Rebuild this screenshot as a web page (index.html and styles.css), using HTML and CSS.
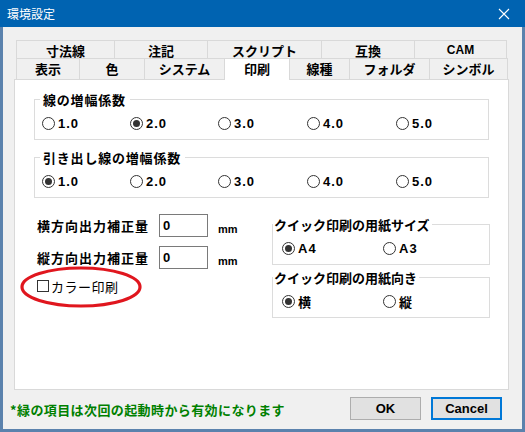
FILE: index.html
```html
<!DOCTYPE html>
<html lang="ja">
<head>
    <meta charset="UTF-8">
    <title>環境設定</title>
    <link rel="stylesheet" href="styles.css">
</head>
<body>
    <div class="window">
        <div class="titlebar">
            <span class="title">環境設定</span>
            <svg class="close" width="12" height="12" viewBox="0 0 12 12">
                <path d="M1 1 L11 11 M11 1 L1 11" stroke="#ffffff" stroke-width="1.1" fill="none"/>
            </svg>
        </div>
        <div class="client">
            <div class="tabs">
                <div class="tab-row back">
                    <div class="tab">寸法線</div>
                    <div class="tab">注記</div>
                    <div class="tab">スクリプト</div>
                    <div class="tab">互換</div>
                    <div class="tab latin">CAM</div>
                </div>
                <div class="tab-row front">
                    <div class="tab">表示</div>
                    <div class="tab">色</div>
                    <div class="tab">システム</div>
                    <div class="tab active">印刷</div>
                    <div class="tab">線種</div>
                    <div class="tab">フォルダ</div>
                    <div class="tab">シンボル</div>
                </div>
            </div>

            <div class="panel">
                <fieldset class="group wide">
                    <legend>線の増幅係数</legend>
                    <div class="radios five">
                        <label class="radio"><span class="dot"></span>1.0</label>
                        <label class="radio checked"><span class="dot"></span>2.0</label>
                        <label class="radio"><span class="dot"></span>3.0</label>
                        <label class="radio"><span class="dot"></span>4.0</label>
                        <label class="radio"><span class="dot"></span>5.0</label>
                    </div>
                </fieldset>

                <fieldset class="group wide second">
                    <legend>引き出し線の増幅係数</legend>
                    <div class="radios five">
                        <label class="radio checked"><span class="dot"></span>1.0</label>
                        <label class="radio"><span class="dot"></span>2.0</label>
                        <label class="radio"><span class="dot"></span>3.0</label>
                        <label class="radio"><span class="dot"></span>4.0</label>
                        <label class="radio"><span class="dot"></span>5.0</label>
                    </div>
                </fieldset>

                <div class="lower">
                    <div class="left-col">
                        <div class="field-row">
                            <span class="field-label">横方向出力補正量</span>
                            <span class="input">0</span>
                            <span class="unit">mm</span>
                        </div>
                        <div class="field-row">
                            <span class="field-label">縦方向出力補正量</span>
                            <span class="input">0</span>
                            <span class="unit">mm</span>
                        </div>
                        <label class="check"><span class="box"></span>カラー印刷</label>
                        <!-- red marker drawn over the checkbox -->
                        <svg class="marker" width="124" height="44" viewBox="0 0 124 44">
                            <ellipse cx="62" cy="22" rx="59" ry="19" fill="none" stroke="#e0161e" stroke-width="3.2"/>
                        </svg>
                    </div>
                    <div class="right-col">
                        <fieldset class="group small">
                            <legend>クイック印刷の用紙サイズ</legend>
                            <div class="radios two">
                                <label class="radio checked"><span class="dot"></span>A4</label>
                                <label class="radio"><span class="dot"></span>A3</label>
                            </div>
                        </fieldset>
                        <fieldset class="group small next">
                            <legend>クイック印刷の用紙向き</legend>
                            <div class="radios two">
                                <label class="radio checked"><span class="dot"></span>横</label>
                                <label class="radio"><span class="dot"></span>縦</label>
                            </div>
                        </fieldset>
                    </div>
                </div>
            </div>

            <div class="footer">
                <p class="note">*緑の項目は次回の起動時から有効になります</p>
                <button class="btn">OK</button>
                <button class="btn focus">Cancel</button>
            </div>
        </div>
    </div>
</body>
</html>
```

FILE: styles.css
```css
* {
    box-sizing: border-box;
}

body {
    margin: 0;
    width: 525px;
    height: 432px;
    overflow: hidden;
    background-color: #5b82ad;
    font-family: "Liberation Sans", "Noto Sans CJK JP", sans-serif;
    color: #000000;
}

.window {
    width: 525px;
    height: 432px;
}

.titlebar {
    height: 27px;
    background-color: #0063b1;
    display: flex;
    align-items: center;
    justify-content: space-between;
    padding: 0 15px 0 7px;
}

.title {
    color: #ffffff;
    font-family: "Noto Sans CJK JP", sans-serif;
    font-size: 12px;
    line-height: 14px;
}

.client {
    margin: 0 3px;
    height: 402px;
    background-color: #f0f0f0;
    padding-top: 13px;
}

/* tab strip, two rows */
.tabs {
    margin-left: 13px;
}

.tab-row {
    display: flex;
}

.tab {
    border-top: 1px solid #d9d9d9;
    border-right: 1px solid #d9d9d9;
    background-color: #f0f0f0;
    font-family: "Noto Sans CJK JP", sans-serif;
    font-weight: bold;
    font-size: 13px;
    text-align: center;
}

.tab:first-child {
    border-left: 1px solid #d9d9d9;
}

.tab.latin {
    font-family: "Liberation Sans", sans-serif;
    font-size: 12px;
}

.back .tab {
    height: 18px;
    line-height: 17px;
    padding-top: 1px;
}

.front .tab {
    height: 21px;
    line-height: 20px;
}

.back .tab:nth-child(1) { width: 99px; }
.back .tab:nth-child(2) { width: 93px; }
.back .tab:nth-child(3) { width: 114px; }
.back .tab:nth-child(4) { width: 93px; }
.back .tab:nth-child(5) { width: 92px; }

.front .tab:nth-child(1) { width: 64px; }
.front .tab:nth-child(2) { width: 65px; }
.front .tab:nth-child(3) { width: 80px; }
.front .tab:nth-child(4) { width: 65px; }
.front .tab:nth-child(5) { width: 60px; }
.front .tab:nth-child(6) { width: 80px; }
.front .tab:nth-child(7) { width: 78px; }

.front .tab.active {
    background-color: #ffffff;
    height: 22px;
    margin-bottom: -1px;
    line-height: 19px;
    position: relative;
    z-index: 1;
    border-left: 1px solid #d9d9d9;
    margin-left: -1px;
    width: 66px;
}

.panel {
    margin-left: 11px;
    width: 495px;
    height: 311px;
    background-color: #ffffff;
    border: 1px solid #d9d9d9;
    padding: 12px 0 0 19px;
}

/* group boxes */
.group {
    border: 1px solid #dcdcdc;
    margin: 0;
    padding: 8px 7px 8px;
    min-width: 0;
}

.group legend {
    padding: 0 4px 0 3px;
    margin-left: -2px;
    font-family: "Noto Sans CJK JP", sans-serif;
    font-weight: bold;
    font-size: 13px;
    line-height: 15px;
    letter-spacing: 0.8px;
}

.group.wide {
    width: 455px;
}

.group.second {
    margin-top: 10px;
}

.radios {
    display: grid;
}

.radios.five {
    grid-template-columns: 88px 88px 89px 89px auto;
}

.radios.two {
    grid-template-columns: 101px auto;
}

.radio {
    display: flex;
    align-items: center;
    height: 16px;
    font-family: "Liberation Sans", "Noto Sans CJK JP", sans-serif;
    font-weight: bold;
    font-size: 13px;
    letter-spacing: 1px;
}

.dot {
    width: 13px;
    height: 13px;
    border: 1px solid #333333;
    border-radius: 50%;
    background-color: #ffffff;
    margin-right: 3px;
    display: grid;
    place-items: center;
}

.checked .dot::after {
    content: "";
    width: 7px;
    height: 7px;
    border-radius: 50%;
    background-color: #333333;
}

/* lower part: offsets + print options */
.lower {
    display: flex;
    margin-top: 16px;
}

.left-col {
    width: 238px;
    padding-left: 3px;
    position: relative;
}

.field-row {
    display: flex;
    align-items: center;
    height: 23px;
    margin-bottom: 9px;
}

.field-label {
    width: 122px;
    font-family: "Noto Sans CJK JP", sans-serif;
    font-weight: bold;
    font-size: 13px;
    letter-spacing: 1px;
}

.input {
    width: 49px;
    height: 23px;
    border: 1px solid #7a7a7a;
    background-color: #ffffff;
    padding-left: 3px;
    font-weight: bold;
    font-size: 13px;
    line-height: 21px;
}

.unit {
    margin-left: 10px;
    padding-top: 6px;
    font-weight: bold;
    font-size: 11px;
}

.check {
    display: flex;
    align-items: center;
    height: 16px;
    margin-top: 4px;
    font-family: "Noto Sans CJK JP", sans-serif;
    font-size: 13px;
    letter-spacing: 0.5px;
}

.box {
    width: 12px;
    height: 12px;
    border: 1px solid #333333;
    background-color: #ffffff;
    margin-right: 2px;
}

.marker {
    position: absolute;
    left: -15px;
    top: 51px;
}

.right-col {
    width: 218px;
    padding-top: 3px;
}

.group.small {
    width: 218px;
    padding-left: 9px;
}

.group.small legend {
    margin-left: -9px;
    padding: 0 2px 0 1px;
    letter-spacing: 0;
}

.group.next {
    margin-top: 5px;
}

/* bottom bar */
.footer {
    display: flex;
    align-items: flex-start;
    padding: 7px 20px 0 7px;
}

.note {
    margin: 3px auto 0 0;
    color: #008000;
    font-family: "Noto Sans CJK JP", sans-serif;
    font-weight: bold;
    font-size: 13px;
    letter-spacing: 0.4px;
}

.btn {
    width: 71px;
    height: 23px;
    margin-left: 10px;
    background-color: #e1e1e1;
    border: 1px solid #adadad;
    font-family: "Liberation Sans", sans-serif;
    font-weight: bold;
    font-size: 13px;
    padding: 0;
}

.btn.focus {
    border: 2px solid #0078d7;
}
```
